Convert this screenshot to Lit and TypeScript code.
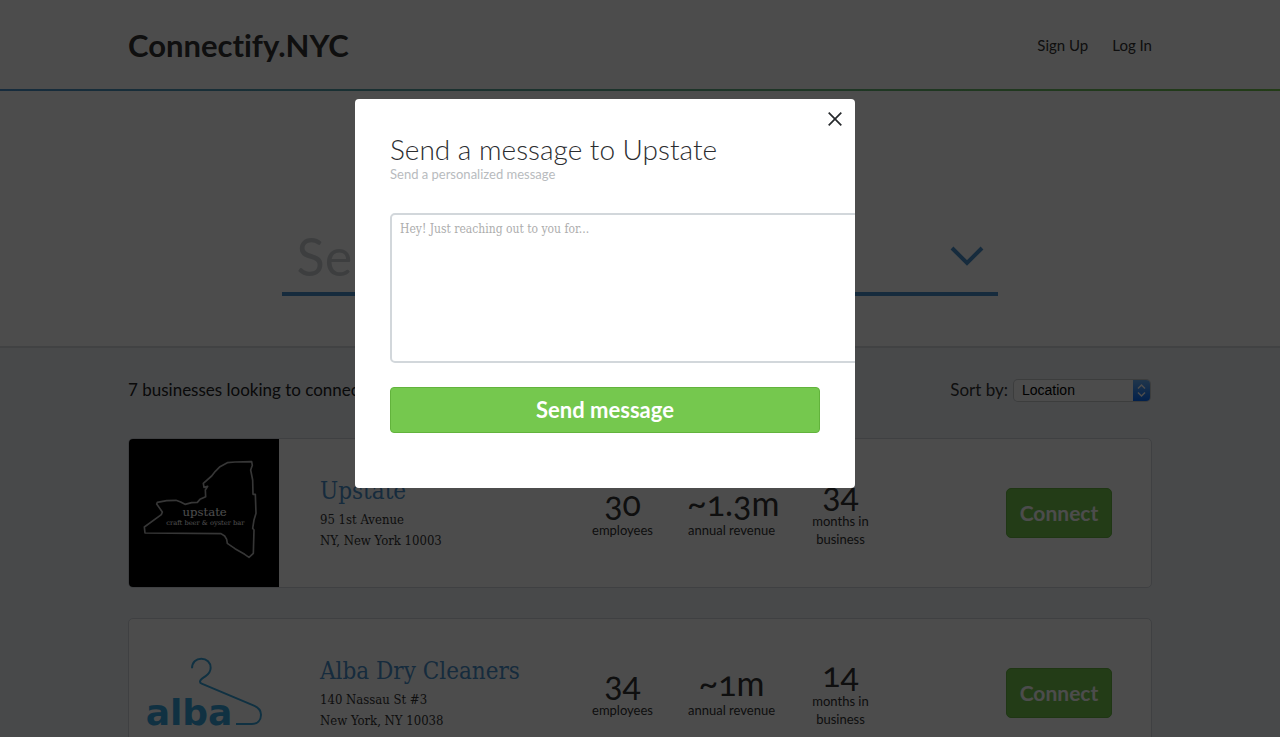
import { LitElement, html, css, svg } from "lit";
import { customElement, property } from "lit/decorators.js";

interface Stat {
  value: string;
  label: string;
}

interface Business {
  name: string;
  street: string;
  city: string;
  logo: string;
  stats: Stat[];
}

const businesses: Business[] = [
  {
    name: "Upstate",
    street: "95 1st Avenue",
    city: "NY, New York 10003",
    logo: "upstate",
    stats: [
      { value: "30", label: "employees" },
      { value: "~1.3m", label: "annual revenue" },
      { value: "34", label: "months in business" },
    ],
  },
  {
    name: "Alba Dry Cleaners",
    street: "140 Nassau St #3",
    city: "New York, NY 10038",
    logo: "alba",
    stats: [
      { value: "34", label: "employees" },
      { value: "~1m", label: "annual revenue" },
      { value: "14", label: "months in business" },
    ],
  },
];

const logos: Record<string, unknown> = {
  upstate: svg`
    <rect x="27" y="27" width="450" height="444" fill="#000" />
    <path
      d="M395 95 L345 96 L322 98 L300 110 L286 124 L275 138 L250 160 L252 172 L263 169 L256 180 L257 200 L240 208 L232 217 L215 218 L195 223 L182 216 L168 211 L140 212 L112 217 L110 222 L127 246 L124 254 L73 291 L75 309 L303 311 L314 318 L320 328 L322 340 L345 356 L374 373 L387 382 L400 370 L402 300 L398 295 L402 270 L408 250 L406 193 L399 193 L398 150 L392 120 L397 106 Z"
      fill="none" stroke="#b4b4b4" stroke-width="5" stroke-linejoin="round" />
    <text x="254" y="257" text-anchor="middle" font-family="DejaVu Serif" font-size="35" fill="#fff">upstate</text>
    <text x="256" y="284" text-anchor="middle" font-family="DejaVu Serif" font-size="20" fill="#fff">craft beer &amp; oyster bar</text>
  `,
  alba: svg`
    <path
      d="M216 175 C216 157 228 146 244 146 C260 146 272 158 272 173 C272 185 266 192 256 199 C246 206 240 208 240 215 Q240 219 245 221 L400 286 C415 292 423 302 423 314 C423 331 412 342 395 342 L348 342"
      fill="none" stroke="#38a5dc" stroke-width="6" />
    <text x="207" y="345" text-anchor="middle" font-family="DejaVu Sans" font-weight="700" font-size="108" fill="#38a5dc">alba</text>
  `,
};

@customElement("business-card")
export class BusinessCard extends LitElement {
  @property({ attribute: false }) business!: Business;

  static styles = css`
    :host {
      display: block;
    }
    .card {
      display: flex;
      align-items: center;
      box-sizing: border-box;
      height: 150px;
      border: 1px solid #d2d7dc;
      border-radius: 5px;
      background: #fff;
      overflow: hidden;
    }
    .logo {
      flex: none;
      width: 150px;
      height: 148px;
    }
    .info {
      flex: 1;
      padding: 0 0 2px 41px;
      font-family: "DejaVu Serif Condensed", "DejaVu Serif", serif;
      font-stretch: condensed;
    }
    .name {
      margin: 0;
      font-size: 24px;
      line-height: 36px;
      font-weight: 400;
    }
    .name a {
      color: #4b92cc;
      text-decoration: none;
    }
    .address {
      margin: 0;
      font-size: 13px;
      line-height: 21px;
      font-style: normal;
      color: #333;
    }
    .stats {
      display: flex;
      align-items: center;
      gap: 20px;
      margin: 0 121px 0 0;
      padding-bottom: 2px;
      text-align: center;
    }
    .stat {
      display: flex;
      flex-direction: column-reverse;
      width: 89px;
    }
    .value {
      margin: 0;
      font-size: 34px;
      line-height: 36px;
      font-weight: 400;
      font-variant-numeric: oldstyle-nums;
      color: #333;
    }
    .label {
      padding: 0 12px;
      margin: 0 -12px;
      font-size: 13px;
      line-height: 18px;
      color: #333;
    }
    .stat:last-child .label {
      margin: 0;
    }
    .connect {
      flex: none;
      width: 106px;
      height: 50px;
      margin-right: 39px;
      padding: 0;
      border: 1px solid #68b543;
      border-radius: 5px;
      background: #75c84e;
      color: #fff;
      font: 700 21px/24px Lato, sans-serif;
    }
  `;

  render() {
    const b = this.business;
    return html`
      <article class="card">
        <svg class="logo" viewBox="27 27 450 444" role="img" aria-label=${b.name}>${logos[b.logo]}</svg>
        <div class="info">
          <h2 class="name"><a href="#">${b.name}</a></h2>
          <address class="address">${b.street}<br />${b.city}</address>
        </div>
        <dl class="stats">
          ${b.stats.map(
            (s) => html`<div class="stat"><dt class="label">${s.label}</dt><dd class="value">${s.value}</dd></div>`
          )}
        </dl>
        <button class="connect" type="button">Connect</button>
      </article>
    `;
  }
}

@customElement("message-dialog")
export class MessageDialog extends LitElement {
  @property() recipient = "";

  static styles = css`
    .overlay {
      position: fixed;
      inset: 0;
      background: rgba(0, 0, 0, 0.7);
    }
    .dialog {
      position: absolute;
      top: 99px;
      left: calc(50% - 285px);
      box-sizing: border-box;
      width: 500px;
      padding: 35px 35px 55px;
      border-radius: 4px;
      background: #fff;
      overflow: hidden;
    }
    .close {
      position: absolute;
      top: 8px;
      right: 8px;
      width: 24px;
      height: 24px;
      padding: 0;
      border: 0;
      background: none;
    }
    .close svg {
      display: block;
    }
    .title {
      margin: 0;
      font-size: 28px;
      line-height: 30px;
      font-weight: 300;
      color: #2b2d30;
    }
    .subtitle {
      display: block;
      margin-bottom: 29px;
      font-size: 13px;
      line-height: 20px;
      color: #b8bbbe;
    }
    .message {
      display: block;
      box-sizing: border-box;
      width: 500px;
      height: 150px;
      margin: 0 0 24px;
      padding: 5px 8px;
      border: 2px solid #d2d7db;
      border-radius: 5px;
      background: #fff;
      resize: none;
      outline: none;
      font-family: "DejaVu Serif Condensed", "DejaVu Serif", serif;
      font-stretch: condensed;
      font-size: 12px;
      line-height: 18px;
      color: #333;
    }
    .message::placeholder {
      color: #adadad;
    }
    .send {
      display: block;
      width: 100%;
      height: 46px;
      padding: 0;
      border: 1px solid #62b33c;
      border-radius: 4px;
      background: #75c84e;
      color: #fff;
      font: 700 22px/24px Lato, sans-serif;
    }
  `;

  render() {
    return html`
      <div class="overlay">
        <form class="dialog" role="dialog" aria-labelledby="title">
          <button class="close" type="button" aria-label="Close">
            <svg width="24" height="24" viewBox="0 0 24 24" fill="none" stroke="#26292c" stroke-width="1.7">
              <path d="M5.7 5.7 L18.3 18.3 M18.3 5.7 L5.7 18.3" />
            </svg>
          </button>
          <h2 class="title" id="title">Send a message to ${this.recipient}</h2>
          <label class="subtitle" for="message">Send a personalized message</label>
          <textarea class="message" id="message" placeholder="Hey! Just reaching out to you for..."></textarea>
          <button class="send" type="button">Send message</button>
        </form>
      </div>
    `;
  }
}

@customElement("app-root")
export class AppRoot extends LitElement {
  static styles = css`
    :host {
      display: block;
      height: 100vh;
      overflow: hidden;
      background: #f0f4f8;
      font-family: Lato, sans-serif;
      color: #333;
    }
    .container {
      width: 80%;
      margin: 0 auto;
    }
    .header {
      background: #fff;
      border-bottom: 2px solid;
      border-image: linear-gradient(90deg, #4b92cc, #75c84e) 1;
    }
    .bar {
      display: flex;
      align-items: center;
      justify-content: space-between;
      height: 89px;
    }
    .brand {
      font-size: 31px;
      line-height: 40px;
      font-weight: 700;
      font-variant-ligatures: none;
      color: #333;
      text-decoration: none;
    }
    .nav {
      display: flex;
      gap: 24px;
    }
    .nav a {
      font-size: 15px;
      line-height: 20px;
      color: #333;
      text-decoration: none;
    }
    .hero {
      padding: 129px 0 50px;
      background: #fff;
      border-bottom: 2px solid #d9dcdf;
    }
    .picker {
      display: flex;
      align-items: center;
      width: 70%;
      margin: 0 auto;
      box-sizing: border-box;
      padding-right: 14px;
      border-bottom: 4px solid #4b92cc;
    }
    .industry {
      flex: 1;
      height: 72px;
      padding: 0 15px;
      border: 0;
      background: none;
      appearance: none;
      font: 400 52px/72px Lato, sans-serif;
      color: #cdd1d4;
    }
    .chevron {
      flex: none;
    }
    .toolbar {
      display: flex;
      align-items: center;
      justify-content: space-between;
      height: 30px;
      padding: 27px 0 33px;
    }
    .count {
      margin: 0;
      font-size: 17px;
      line-height: 24px;
      font-weight: 400;
      color: #222;
    }
    .sort {
      display: flex;
      align-items: center;
      gap: 6px;
      padding-right: 2px;
      font-size: 17px;
      line-height: 24px;
    }
    .sort-box {
      display: flex;
      width: 136px;
      height: 21px;
      box-sizing: border-box;
      border-radius: 4px;
      overflow: hidden;
      background: #fff;
      box-shadow: 0 0 0 1px #c8cbce;
    }
    .order {
      flex: 1;
      min-width: 0;
      padding: 0 8px;
      border: 0;
      background: none;
      appearance: none;
      font: 14px/20px "Liberation Sans", sans-serif;
      color: #000;
    }
    .stepper {
      flex: none;
      background: linear-gradient(#6cb3fa, #076dfe);
    }
    .list {
      display: grid;
      gap: 30px;
      padding-bottom: 30px;
    }
  `;

  render() {
    return html`
      <header class="header">
        <div class="container bar">
          <a class="brand" href="#">Connectify.NYC</a>
          <nav class="nav"><a href="#">Sign Up</a><a href="#">Log In</a></nav>
        </div>
      </header>
      <section class="hero">
        <div class="container">
          <div class="picker">
            <select class="industry" aria-label="Industry">
              <option>Select an industry</option>
            </select>
            <svg class="chevron" width="34" height="22" viewBox="0 0 34 22" fill="none" stroke="#4b92cc" stroke-width="4">
              <path d="M2 3 L17 18 L32 3" />
            </svg>
          </div>
        </div>
      </section>
      <main class="container">
        <div class="toolbar">
          <h1 class="count">7 businesses looking to connect</h1>
          <div class="sort">
            <label for="order">Sort by:</label>
            <div class="sort-box">
              <select class="order" id="order">
                <option>Location</option>
              </select>
              <svg class="stepper" width="17" height="21" viewBox="0 0 17 21" fill="none" stroke="#fff" stroke-width="1.5">
                <path d="M5 8.5 L8.5 5 L12 8.5 M5 12.5 L8.5 16 L12 12.5" />
              </svg>
            </div>
          </div>
        </div>
        <div class="list">
          ${businesses.map((b) => html`<business-card .business=${b}></business-card>`)}
        </div>
      </main>
      <message-dialog recipient="Upstate"></message-dialog>
    `;
  }
}
